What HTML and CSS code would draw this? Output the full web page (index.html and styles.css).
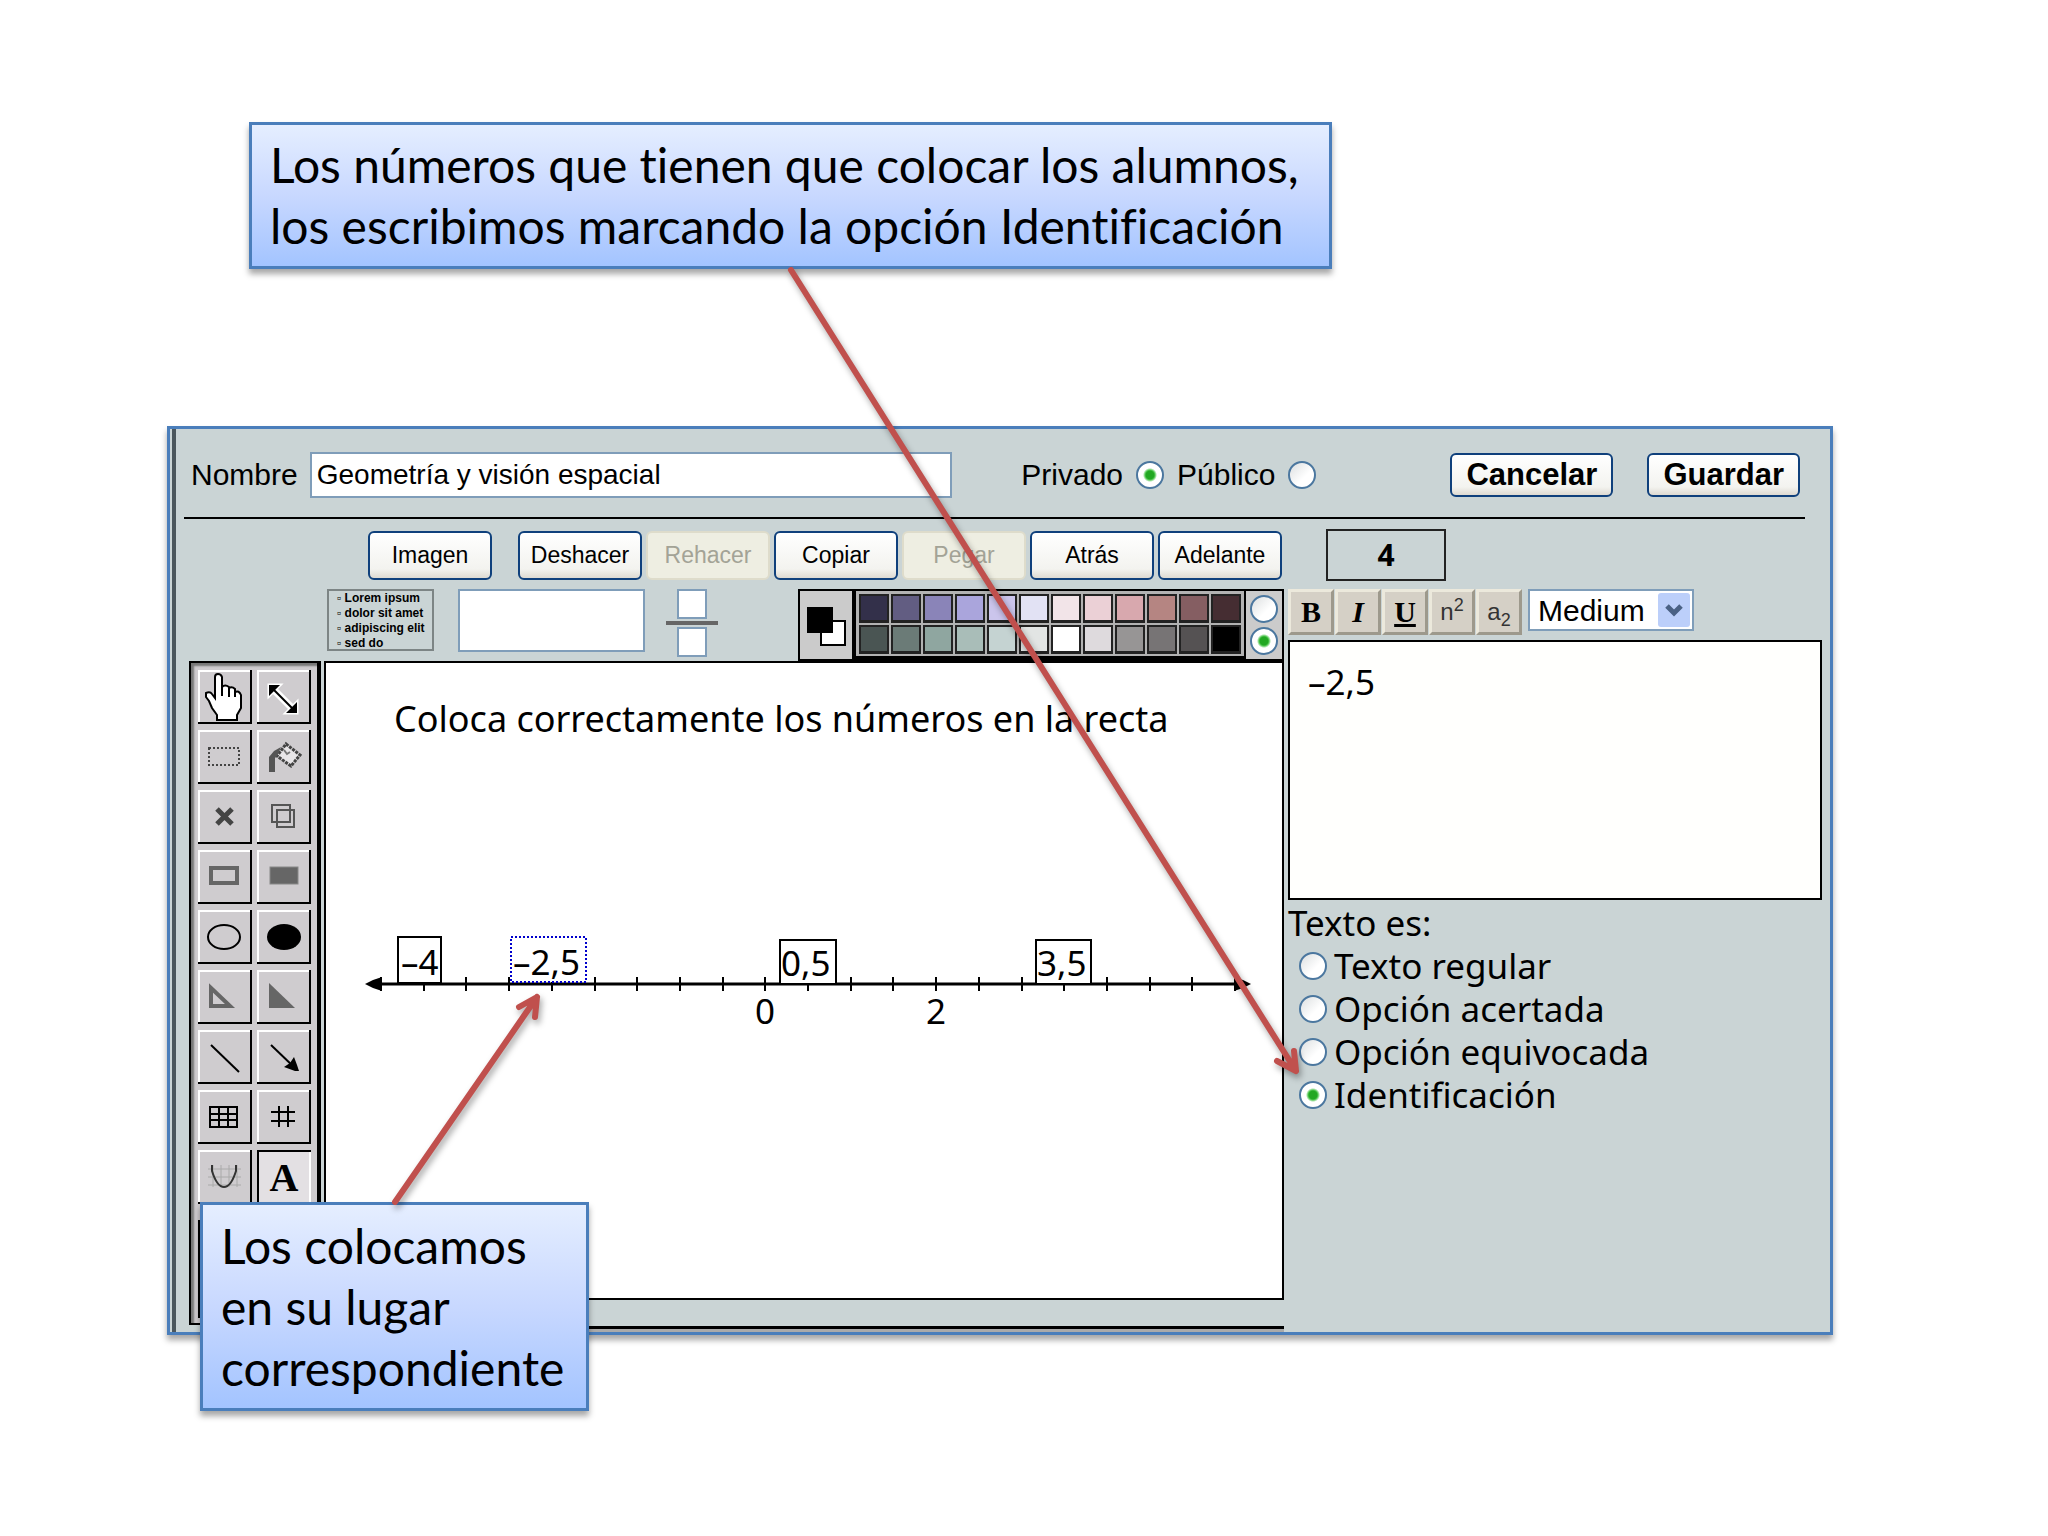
FILE: index.html
```html
<!DOCTYPE html>
<html lang="es">
<head>
  <meta charset="UTF-8" />
  <meta name="viewport" content="width=device-width, initial-scale=1" />
  <title>Geometría y visión espacial</title>
  <link rel="stylesheet" href="styles.css">
</head>
<body>

<main class="slide">
  <p class="callout">Los números que tienen que colocar los alumnos,<br>los escribimos marcando la opción Identificación</p>

  <section class="panel">
    <div class="panel-inner">
      <header class="topbar">
        <label for="nombre">Nombre</label>
        <input type="text" id="nombre" class="name-input" value="Geometría y visión espacial">
        <div class="visibility">
          <label for="privado">Privado</label>
          <input type="radio" id="privado" name="visibility" checked>
          <label for="publico">Público</label>
          <input type="radio" id="publico" name="visibility">
        </div>
        <div class="actions">
          <button class="btn btn-bold">Cancelar</button>
          <button class="btn btn-bold">Guardar</button>
        </div>
      </header>

      <div class="editor">
        <div class="left">
          <div class="commands">
            <button class="btn first">Imagen</button>
            <button class="btn">Deshacer</button>
            <button class="btn" disabled>Rehacer</button>
            <button class="btn">Copiar</button>
            <button class="btn" disabled>Pegar</button>
            <button class="btn">Atrás</button>
            <button class="btn">Adelante</button>
          </div>

          <div class="options">
            <ul class="sample">
              <li>Lorem ipsum</li>
              <li>dolor sit amet</li>
              <li>adipiscing elit</li>
              <li>sed do</li>
            </ul>
            <input type="text" class="sample-input" aria-label="Texto">
            <div class="fraction">
              <input type="text" aria-label="Numerador">
              <hr>
              <input type="text" aria-label="Denominador">
            </div>
            <div class="colors">
              <div class="current">
                <svg width="40" height="40" viewBox="0 0 40 40">
                  <rect x="14" y="14" width="24" height="24" fill="#fff" stroke="#000" stroke-width="2"/>
                  <rect x="0" y="0" width="26" height="26"/>
                </svg>
              </div>
              <div class="swatches" id="swatches"></div>
              <div class="color-target">
                <input type="radio" name="target" aria-label="Relleno">
                <input type="radio" name="target" aria-label="Trazo" checked>
              </div>
            </div>
          </div>

          <div class="workspace">
            <div class="tools">
              <div class="tool-grid">
                <button class="tool" aria-label="Mano"><svg viewBox="0 0 54 54"><path d="M17 28V7q0-3 3-3t4 3v14v-4q3-3 7 0v4v-3q3-2 6 1v3q4-2 6 3v13l-4 7v5H19v-5l-5-7l-3-7l-3-4v-4q4-2 6 1z" fill="#fff" stroke="#000" stroke-width="2"/><path d="M24 17v9M31 18v9M37 20v7" stroke="#000" stroke-width="2"/></svg></button>
                <button class="tool" aria-label="Seleccionar"><svg viewBox="0 0 54 54"><path d="M12 15h11l-4 4l17 17l4-4v11H29l4-4L16 22l-4 4z" fill="#fff" stroke="#fff" stroke-width="3"/><path d="M12 15h11L12 26zM40 43V32L29 43z"/><path d="M16 19l20 20" stroke="#000" stroke-width="2"/></svg></button>
                <button class="tool" aria-label="Marco"><svg viewBox="0 0 54 54"><rect x="11" y="18" width="30" height="17" fill="none" stroke="#444" stroke-width="2" stroke-dasharray="2 2"/></svg></button>
                <button class="tool" aria-label="Rellenar"><svg viewBox="0 0 54 54"><path d="M29 14l14 11l-9 11l-14-10z" fill="#e8e6e8" stroke="#444" stroke-width="3" stroke-dasharray="3 1"/><path d="M12 42V27l5-6l7-4l-4 9l-2 2v14z" fill="#555"/><path d="M27 20l3 4l3-2" fill="none" stroke="#777" stroke-width="2"/></svg></button>
                <button class="tool" aria-label="Borrar"><svg viewBox="0 0 54 54"><path d="M19 19l15 15M34 19L19 34" stroke="#444" stroke-width="5"/></svg></button>
                <button class="tool" aria-label="Duplicar"><svg viewBox="0 0 54 54"><path d="M15 15h18v17H15zM20 20h17v17H20z" fill="none" stroke="#555" stroke-width="2"/></svg></button>
                <button class="tool" aria-label="Rectángulo"><svg viewBox="0 0 54 54"><rect x="13" y="18" width="26" height="15" fill="none" stroke="#666" stroke-width="4"/></svg></button>
                <button class="tool" aria-label="Rectángulo relleno"><svg viewBox="0 0 54 54"><rect x="13" y="17" width="28" height="17" fill="#666" stroke="#888"/></svg></button>
                <button class="tool" aria-label="Elipse"><svg viewBox="0 0 54 54"><ellipse cx="26" cy="27" rx="16" ry="12" fill="none" stroke="#000" stroke-width="2"/></svg></button>
                <button class="tool" aria-label="Elipse rellena"><svg viewBox="0 0 54 54"><ellipse cx="27" cy="27" rx="17" ry="13"/></svg></button>
                <button class="tool" aria-label="Triángulo"><svg viewBox="0 0 54 54"><path d="M13 18v18h19z" fill="none" stroke="#666" stroke-width="4"/></svg></button>
                <button class="tool" aria-label="Triángulo relleno"><svg viewBox="0 0 54 54"><path d="M12 13v25h26z" fill="#666"/></svg></button>
                <button class="tool" aria-label="Línea"><svg viewBox="0 0 54 54"><path d="M13 15l28 27" stroke="#000" stroke-width="2"/></svg></button>
                <button class="tool" aria-label="Flecha"><svg viewBox="0 0 54 54"><path d="M14 15l24 23" stroke="#000" stroke-width="2"/><path d="M42 41H38l-11-4l6-4l4-6l3 8z"/></svg></button>
                <button class="tool" aria-label="Tabla"><svg viewBox="0 0 54 54"><path d="M12 17h27v20H12zM12 24h27M12 30h27M21 17v20M30 17v20" fill="none" stroke="#000" stroke-width="2"/></svg></button>
                <button class="tool" aria-label="Cuadrícula"><svg viewBox="0 0 54 54"><path d="M14 22h24M14 31h24M22 16v21M31 16v21" stroke="#000" stroke-width="2"/></svg></button>
                <button class="tool" aria-label="Gráfica"><svg viewBox="0 0 54 54"><path d="M10 19h33M10 27h33M10 35h33M15 15v22M23 15v22M31 15v22M39 15v22" stroke="#aaa"/><path d="M14 15v6q5 16 12 16t12-16v-6" fill="none" stroke="#333" stroke-width="2"/></svg></button>
                <button class="tool active">A</button>
              </div>
              <div class="tool-slot"></div>
            </div>

            <div class="stage">
              <div class="canvas">
                <h1>Coloca correctamente los números en la recta</h1>
                <svg class="number-line" width="900" height="120" viewBox="360 930 900 120">
                  <path d="M372 984H1245" stroke="#000" stroke-width="3"/>
                  <path d="M365 984l8-4l9-3v14l-9-3zM1251 984l-8-4l-9-3v14l9-3z"/>
                  <g id="ticks" stroke="#000" stroke-width="2"></g>
                  <g fill="#fff" stroke="#000" stroke-width="2">
                    <rect x="398" y="937" width="43" height="46"/>
                    <rect x="780" y="940" width="56" height="44"/>
                    <rect x="1036" y="940" width="55" height="44"/>
                    <rect x="511" y="937" width="75" height="45" stroke="#00c" stroke-dasharray="2 2"/>
                  </g>
                  <text x="401" y="975">–4</text>
                  <text x="513" y="975">–2,5</text>
                  <text x="781" y="976">0,5</text>
                  <text x="1037" y="976">3,5</text>
                  <text x="765" y="1024" text-anchor="middle">0</text>
                  <text x="936" y="1024" text-anchor="middle">2</text>
                </svg>
              </div>
              <div class="footer-bar"></div>
            </div>
          </div>
        </div>

        <aside class="right">
          <output class="counter">4</output>
          <div class="format">
            <button class="fmt"><b>B</b></button>
            <button class="fmt"><b><i>I</i></b></button>
            <button class="fmt"><b><u>U</u></b></button>
            <button class="fmt light">n<sup>2</sup></button>
            <button class="fmt light">a<sub>2</sub></button>
            <div class="size-wrap">
              <select class="size" aria-label="Tamaño">
                <option>Medium</option>
              </select>
              <svg class="size-arrow" width="32" height="34" viewBox="0 0 32 34"><rect width="32" height="34" rx="3" fill="#bccffa"/><path d="M9 13l7 7l7-7" fill="none" stroke="#4a6184" stroke-width="5"/></svg>
            </div>
          </div>
          <textarea class="text-box" aria-label="Texto">–2,5</textarea>
          <fieldset class="kinds">
            <legend>Texto es:</legend>
            <div class="kind"><input type="radio" name="kind" id="regular"><label for="regular">Texto regular</label></div>
            <div class="kind"><input type="radio" name="kind" id="acertada"><label for="acertada">Opción acertada</label></div>
            <div class="kind"><input type="radio" name="kind" id="equivocada"><label for="equivocada">Opción equivocada</label></div>
            <div class="kind"><input type="radio" name="kind" id="identificacion" checked><label for="identificacion">Identificación</label></div>
          </fieldset>
        </aside>
      </div>
    </div>
  </section>

  <p class="callout callout-bottom">Los colocamos<br>en su lugar<br>correspondiente</p>

  <!-- arrows from the callouts to the panel -->
  <svg class="arrows" width="1400" height="1300" viewBox="0 0 1400 1300">
    <g fill="none" stroke="#c0504d" stroke-width="6" stroke-linecap="round" stroke-linejoin="round">
      <path d="M791 270L1296 1071M1277 1061L1296 1071L1294 1051"/>
      <path d="M395 1202L537 997M519 1007L537 997L535 1017"/>
    </g>
  </svg>
</main>

<script>
  const colors = [
    '#33304a', '#625d82', '#8a84b8', '#aaa5dc', '#cbc5ec', '#e2e2f4', '#f2e4e8', '#ebd0d6', '#d8a8ae', '#b58582', '#855e62', '#452d32',
    '#4a5553', '#6b7b77', '#8fa6a0', '#a9bdb8', '#c5d3d2', '#e2e5e4', '#ffffff', '#dedadd', '#979595', '#777475', '#555253', '#000000'
  ];

  const swatches = document.getElementById('swatches');
  colors.forEach(color => {
    const swatch = document.createElement('button');
    swatch.className = 'swatch';
    swatch.style.backgroundColor = color;
    swatch.setAttribute('aria-label', color);
    swatches.appendChild(swatch);
  });

  // One tick every half unit
  const ticks = document.getElementById('ticks');
  for (let i = 0; i <= 20; i++) {
    const x = Math.round(381 + i * 42.7);
    const tick = document.createElementNS('http://www.w3.org/2000/svg', 'path');
    tick.setAttribute('d', `M${x} 977V991`);
    ticks.appendChild(tick);
  }
</script>

</body>
</html>
```
FILE: styles.css
```css
* {
  box-sizing: border-box;
}

body {
  margin: 0;
  background-color: #fff;
  color: #000;
  font-family: "Liberation Sans", Arial, sans-serif;
}

button,
input,
select,
textarea {
  margin: 0;
  padding: 0;
  font-family: inherit;
  color: #000;
  border-radius: 0;
}

.slide {
  position: relative;
  min-height: 100vh;
  padding: 122px 215px 120px 167px;
}

.callout {
  width: fit-content;
  margin: 0 0 0 82px;
  padding: 9px 30px 10px 18px;
  border: 3px solid #4a7ebb;
  background: linear-gradient(#e5eeff, #c8d8ff 50%, #a3c4ff);
  box-shadow: 0 5px 6px rgba(0, 0, 0, 0.35);
  font-family: Lato, sans-serif;
  font-size: 48px;
  font-variant-ligatures: none;
  line-height: 61px;
}

.callout-bottom {
  position: absolute;
  left: 200px;
  top: 1202px;
  margin: 0;
  padding: 10px 22px 10px 18px;
}

.arrows {
  position: absolute;
  left: 0;
  top: 0;
  pointer-events: none;
  filter: drop-shadow(2px 4px 3px rgba(0, 0, 0, 0.35));
}

.panel {
  margin-top: 157px;
  padding-left: 2px;
  border: 3px solid #4a7ebb;
  background-color: #cad4d5;
  box-shadow: 0 5px 6px rgba(0, 0, 0, 0.35);
}

.panel-inner {
  border-left: 4px solid #4b565c;
}

/* Top bar */
.topbar {
  display: flex;
  align-items: center;
  height: 90px;
  margin: 0 25px 0 8px;
  padding: 4px 5px 0 7px;
  border-bottom: 2px solid #000;
  font-size: 30px;
}

.name-input {
  flex: 1;
  height: 46px;
  margin: 0 69px 0 12px;
  padding-left: 5px;
  border: 2px solid #7f9db9;
  background-color: #fff;
  font-size: 28px;
}

.visibility {
  display: flex;
  align-items: center;
  gap: 13px;
}

input[type="radio"] {
  appearance: none;
  flex: none;
  width: 28px;
  height: 28px;
  border: 2px solid #4b779f;
  border-radius: 50%;
  background: linear-gradient(135deg, #dcdfe0, #fff 60%);
}

input[type="radio"]:checked {
  background: radial-gradient(circle, #22a822 0 4px, #55c855 5px, #fff 7px);
}

.actions {
  display: flex;
  gap: 34px;
  margin-left: 134px;
}

.btn {
  width: 124px;
  height: 49px;
  border: 2px solid #0f407c;
  border-radius: 6px;
  background: linear-gradient(#fff, #f3f3ef 80%, #dedad2);
  font-size: 23px;
  white-space: nowrap;
}

.btn:disabled {
  border: 2px solid #dedccb;
  background: #eeeee2;
  color: #a3a396;
}

.btn-bold {
  width: auto;
  height: 44px;
  padding: 0 14px;
  font-size: 31px;
  font-weight: bold;
}

/* Editor */
.editor {
  display: flex;
  gap: 4px;
  padding: 0 8px 0 13px;
}

.left {
  flex: 1;
}

.commands {
  display: flex;
  justify-content: flex-end;
  gap: 4px;
  padding: 12px 2px 0 0;
}

.commands .first {
  margin-right: 22px;
}

.options {
  display: flex;
  align-items: flex-start;
  height: 72px;
  margin-top: 9px;
  padding-left: 138px;
}

.sample {
  width: 107px;
  height: 62px;
  margin: 0 24px 0 0;
  padding: 0 0 0 8px;
  border: 2px solid #7d8585;
  list-style: none;
  font-size: 12px;
  font-weight: bold;
  line-height: 15px;
  white-space: nowrap;
}

.sample li::before {
  content: "▫ ";
}

.sample-input {
  width: 187px;
  height: 63px;
  border: 2px solid #7f9db9;
  background-color: #fff;
}

.fraction {
  display: flex;
  flex-direction: column;
  align-items: center;
  gap: 2px;
  width: 52px;
  margin-left: 21px;
}

.fraction input {
  width: 30px;
  height: 30px;
  border: 2px solid #7f9db9;
  background-color: #fff;
}

.fraction hr {
  width: 100%;
  height: 4px;
  margin: 0;
  border: 0;
  background-color: #666;
}

.colors {
  display: flex;
  height: 72px;
  margin-left: auto;
  border: 2px solid #000;
  background-color: #cbcbcb;
}

.current {
  display: flex;
  align-items: center;
  padding: 4px 5px 0 7px;
  border-right: 2px solid #000;
}

.swatches {
  display: grid;
  grid-template-columns: repeat(12, 30px);
  grid-auto-rows: 29px;
  gap: 2px;
  padding: 3px;
  border: solid #000;
  border-width: 0 2px 3px 2px;
  background-color: #b2b2b2;
}

.swatch {
  border: 2px solid #222;
  border-bottom-width: 3px;
}

.color-target {
  display: flex;
  flex-direction: column;
  justify-content: center;
  gap: 4px;
  padding: 0 4px;
}

.workspace {
  display: flex;
  gap: 3px;
}

.tools {
  width: 132px;
  height: 664px;
  padding: 7px 6px 6px 7px;
  border: 2px solid #000;
  border-right-width: 4px;
  background-color: #cfcccf;
  box-shadow: inset 3px 3px 2px #777;
}

.tool-grid {
  display: grid;
  grid-template-columns: 54px 54px;
  gap: 6px 5px;
}

.tool {
  height: 54px;
  border: 0;
  background-color: #cfcccf;
  box-shadow: inset -2px -2px #000, inset 2px 2px #fff;
}

.tool svg {
  display: block;
  width: 54px;
  height: 54px;
}

.tool.active {
  background-color: #e3e0e3;
  box-shadow: inset 2px 2px #000, inset -2px -2px #fff;
  font-family: "Liberation Serif", serif;
  font-size: 40px;
  font-weight: bold;
}

.tool-slot {
  height: 98px;
  margin-top: 16px;
  border: 3px solid #000;
}

.stage {
  flex: 1;
}

.canvas {
  height: 639px;
  padding: 29px 0 0 34px;
  border: 2px solid #000;
  background-color: #fff;
}

.canvas h1 {
  margin: 0 0 0 34px;
  font-family: "Noto Sans", sans-serif;
  font-size: 36px;
  font-weight: normal;
  line-height: 54px;
  white-space: nowrap;
}

.number-line {
  display: block;
  margin-top: 184px;
  font-family: "Noto Sans", sans-serif;
  font-size: 35px;
}

.footer-bar {
  height: 6px;
  margin-top: 26px;
  border-top: 3px solid #000;
  background-color: #aaa;
}

/* Right column */
.right {
  width: 534px;
}

.counter {
  display: block;
  width: 120px;
  height: 52px;
  margin: 10px 0 8px 38px;
  border: 2px solid #222;
  font-family: "Noto Sans", sans-serif;
  font-size: 30px;
  font-weight: bold;
  line-height: 48px;
  text-align: center;
}

.format {
  display: flex;
  gap: 1px;
  height: 51px;
}

.fmt {
  width: 46px;
  height: 46px;
  border: 3px solid;
  border-color: #ece9dc #9d998c #9d998c #ece9dc;
  background-color: #d5d0c6;
  font-family: "Liberation Serif", serif;
  font-size: 30px;
}

.fmt.light {
  font-family: "Liberation Sans", Arial, sans-serif;
  font-size: 24px;
  color: #333;
}

.fmt sup,
.fmt sub {
  font-size: 18px;
  line-height: 0;
}

.size-wrap {
  position: relative;
  margin-left: 5px;
}

.size {
  appearance: none;
  width: 166px;
  height: 42px;
  padding-left: 8px;
  border: 2px solid #7f9db9;
  background-color: #fff;
  font-size: 30px;
}

.size-arrow {
  position: absolute;
  top: 4px;
  right: 4px;
  pointer-events: none;
}

.text-box {
  display: block;
  width: 100%;
  height: 260px;
  padding: 16px 18px;
  border: 2px solid #000;
  background-color: #fffffd;
  font-family: "Noto Sans", sans-serif;
  font-size: 35px;
  line-height: 48px;
  resize: none;
}

.kinds {
  margin: 0;
  padding: 0;
  border: 0;
  font-family: "Noto Sans", sans-serif;
  font-size: 35px;
  line-height: 43px;
}

.kinds legend {
  padding: 1px 0 0;
}

.kind {
  display: flex;
  align-items: center;
  gap: 7px;
  padding-left: 11px;
}
```
